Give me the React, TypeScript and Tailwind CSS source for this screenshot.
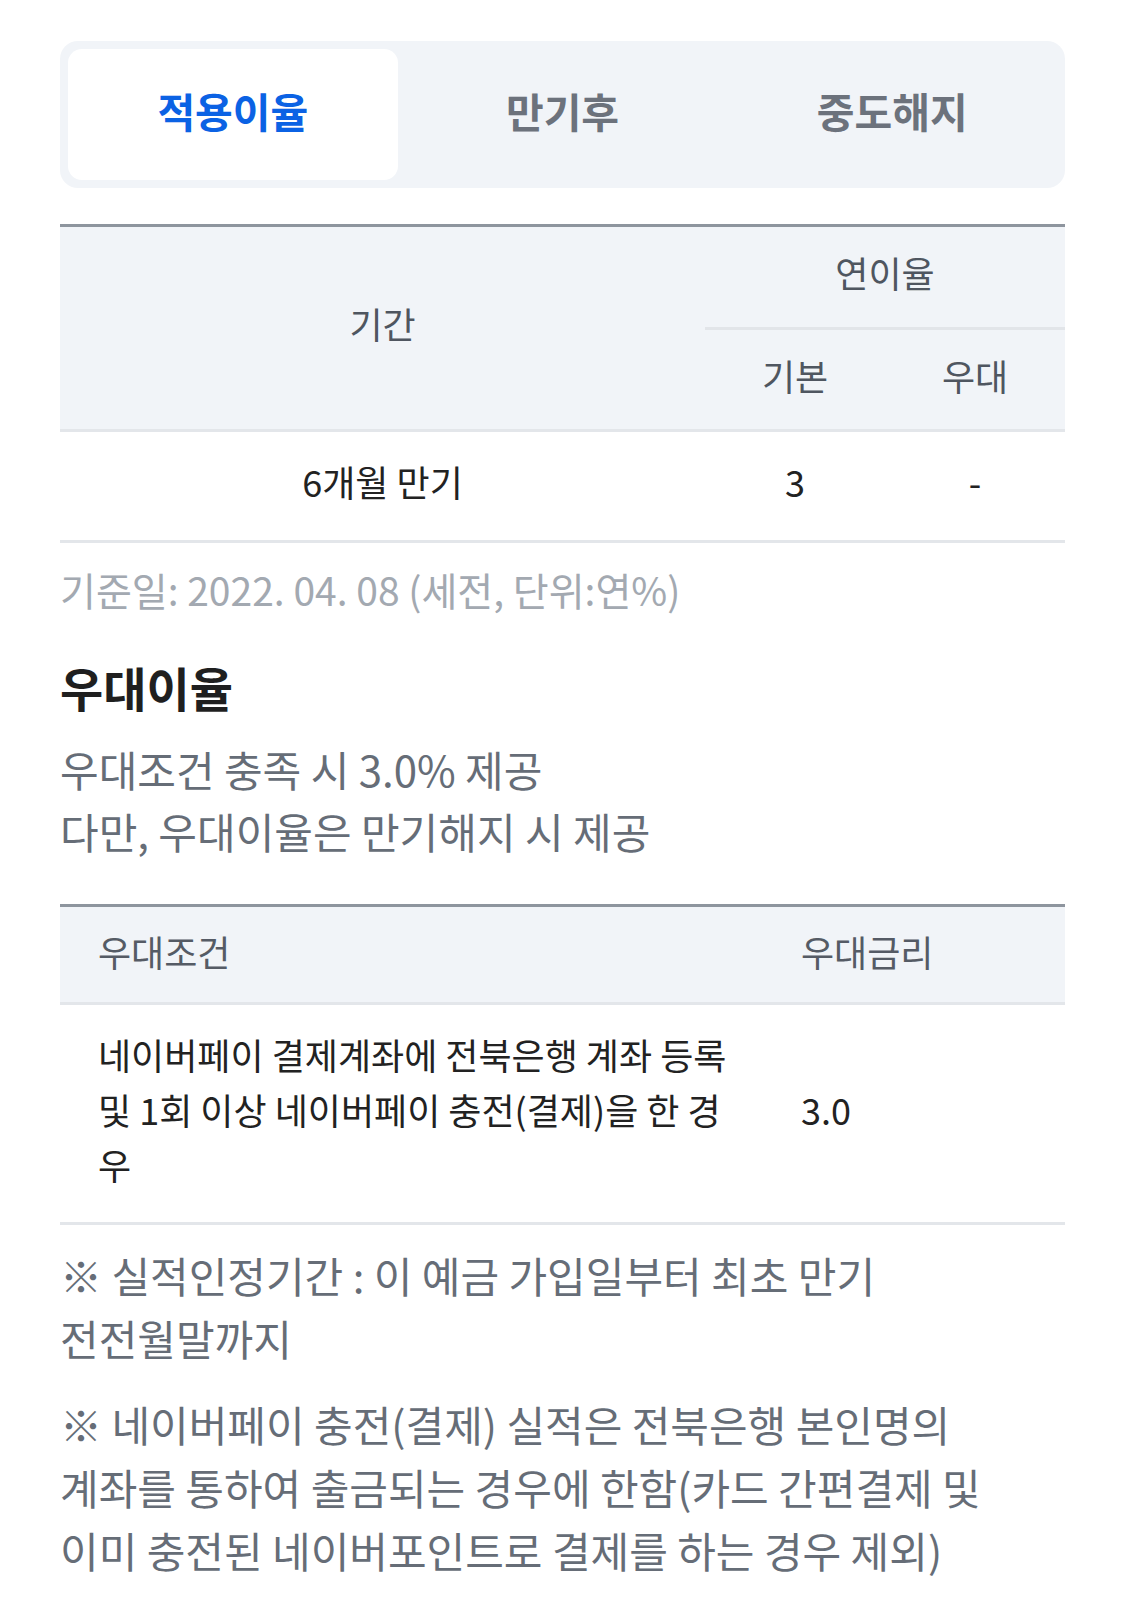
import React from "react";

const FONT = { fontFamily: '"Noto Sans CJK KR", "Noto Sans", sans-serif' };

export default function App() {
  return (
    <div className="min-h-screen bg-white px-[60px] pt-[41px] pb-10" style={FONT}>
      {/* Tabs */}
      <div className="flex h-[147px] rounded-[18px] bg-[#f1f4f8] p-[8px]">
        <div className="flex flex-1 items-center justify-center rounded-[14px] bg-white pb-[8px] text-[41px] font-bold text-[#0b62e4]">
          적용이율
        </div>
        <div className="flex flex-1 items-center justify-center pb-[8px] text-[41px] font-bold text-[#6c727c]">
          만기후
        </div>
        <div className="flex flex-1 items-center justify-center pb-[8px] text-[41px] font-bold text-[#6c727c]">
          중도해지
        </div>
      </div>

      {/* Rate table */}
      <div className="mt-[36px] border-t-[3px] border-[#8e959e]">
        <div className="grid grid-cols-[645px_180px_180px] grid-rows-[103px_99px] border-b-[3px] border-[#e3e6ea] bg-[#f1f4f8] text-[36px] text-[#4f5660]">
          <div className="row-span-2 flex items-center justify-center pb-[10px]">기간</div>
          <div className="col-span-2 flex items-center justify-center border-b-[3px] border-[#e2e5e9] pb-[10px]">
            연이율
          </div>
          <div className="flex items-center justify-center pb-[10px]">기본</div>
          <div className="flex items-center justify-center pb-[10px]">우대</div>
        </div>
        <div className="grid h-[111px] grid-cols-[645px_180px_180px] border-b-[3px] border-[#e3e6ea] text-[36px] text-[#222222]">
          <div className="flex items-center justify-center pb-[10px]">6개월 만기</div>
          <div className="flex items-center justify-center pb-[10px]">3</div>
          <div className="flex items-center justify-center pb-[10px]">-</div>
        </div>
      </div>

      <div className="mt-[20px] text-[39px] leading-[52px] text-[#a3a9b1]">
        기준일: 2022. 04. 08 (세전, 단위:연%)
      </div>

      <h2 className="mt-[42px] text-[47px] font-bold leading-[60px] text-[#1f1f1f]">우대이율</h2>

      <div className="mt-[21px] text-[42px] leading-[62px] text-[#666d77]">
        <div>우대조건 충족 시 3.0% 제공</div>
        <div>다만, 우대이율은 만기해지 시 제공</div>
      </div>

      {/* Preferential table */}
      <div className="mt-[42px] border-t-[3px] border-[#8e959e]">
        <div className="grid h-[98px] grid-cols-[741px_1fr] items-center border-b-[3px] border-[#e3e6ea] bg-[#f1f4f8] pb-[8px] text-[36px] text-[#555b65]">
          <div className="pl-[38px]">우대조건</div>
          <div>우대금리</div>
        </div>
        <div className="grid grid-cols-[741px_1fr] items-center border-b-[3px] border-[#e3e6ea] pt-[22px] pb-[30px] text-[36px] leading-[55px] text-[#222222]">
          <div className="pl-[38px] pr-[63px]">
            네이버페이 결제계좌에 전북은행 계좌 등록 및 1회 이상 네이버페이 충전(결제)을 한 경우
          </div>
          <div>3.0</div>
        </div>
      </div>

      <div className="mt-[18px] max-w-[965px] break-keep text-[42px] leading-[63px] text-[#666d77]">
        <p>※ 실적인정기간 : 이 예금 가입일부터 최초 만기 전전월말까지</p>
        <p className="mt-[23px]">
          ※ 네이버페이 충전(결제) 실적은 전북은행 본인명의 계좌를 통하여 출금되는 경우에 한함(카드 간편결제 및 이미 충전된 네이버포인트로 결제를 하는 경우 제외)
        </p>
      </div>
    </div>
  );
}
